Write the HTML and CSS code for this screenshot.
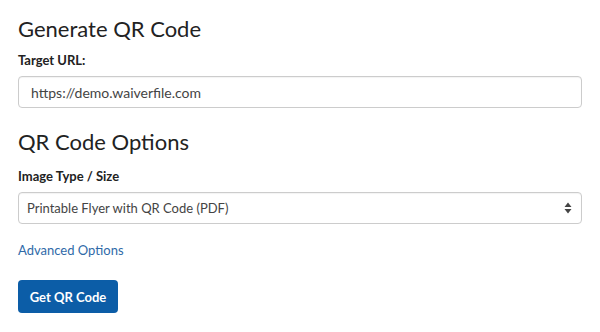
FILE: index.html
```html
<!DOCTYPE html>
<html>
<head>
<meta charset="utf-8">
<link rel="stylesheet" href="styles.css">
</head>
<body>
<div class="page">
  <h3 class="title">Generate QR Code</h3>
  <label class="label">Target URL:</label>
  <div class="input">https://demo.waiverfile.com</div>
  <h3 class="title title-2">QR Code Options</h3>
  <label class="label label-2">Image Type / Size</label>
  <div class="select">
    <span>Printable Flyer with QR Code (PDF)</span>
    <svg class="arrows" width="8" height="12" viewBox="0 0 8 12"><path d="M4 0.5 L7.5 5 L0.5 5 Z M4 11.5 L7.5 7 L0.5 7 Z" fill="#444"/></svg>
  </div>
  <a class="link">Advanced Options</a>
  <div><button class="btn">Get QR Code</button></div>
</div>
</body>
</html>
```
FILE: styles.css
```css
html, body { margin: 0; padding: 0; background: #fff; }
body { font-family: Lato, "Open Sans", sans-serif; color: #333; }
.page { padding: 14px 18px 0 18px; display: flex; flex-direction: column; align-items: stretch; }
.title { margin: 0; font-size: 22px; font-weight: 400; line-height: 30px; color: #222; }
.title-2 { margin-top: 19px; }
.label { font-size: 13px; font-weight: 700; margin-top: 7px; line-height: 18px; color: #222; }
.label-2 { margin-top: 10px; }
.input, .select { margin-top: 7px; height: 32px; box-sizing: border-box; border: 1px solid #ccc; border-radius: 4px; font-size: 14px; padding: 0 12px; display: flex; align-items: center; color: #444; box-shadow: inset 0 1px 1px rgba(0,0,0,.05); }
.select { justify-content: space-between; font-size: 13px; padding: 0 8px; }
.arrows { margin-right: 1px; }
.link { margin-top: 16px; font-size: 13px; color: #2f6aa8; line-height: 20px; }
.btn { margin-top: 20px; width: 100px; height: 33px; border: 0; border-radius: 4px; background: #0c5da7; color: #fff; font-family: Lato, sans-serif; font-weight: 700; font-size: 13px; }
```
